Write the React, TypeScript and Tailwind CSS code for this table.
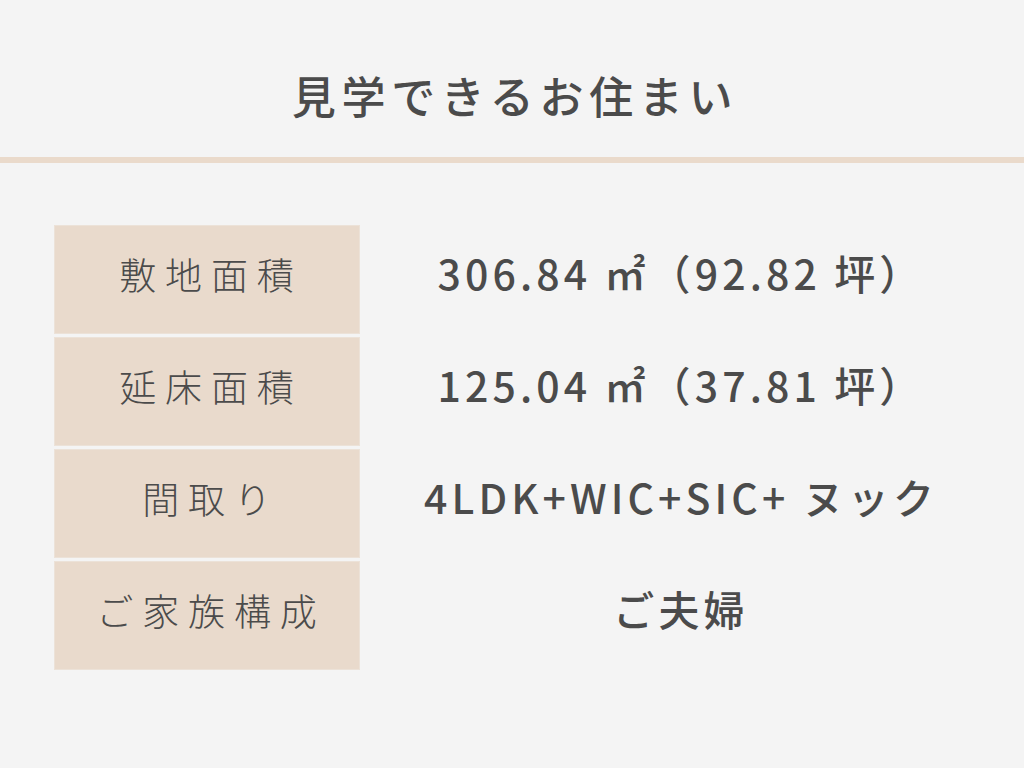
const rows: { label: string; value: string }[] = [
  { label: "敷地面積", value: "306.84 ㎡（92.82 坪）" },
  { label: "延床面積", value: "125.04 ㎡（37.81 坪）" },
  { label: "間取り", value: "4LDK+WIC+SIC+ ヌック" },
  { label: "ご家族構成", value: "ご夫婦" },
];

const jp = "font-['Noto_Sans_CJK_JP','Noto_Sans',sans-serif]";

export default function App() {
  return (
    <div className={`h-[768px] w-[1024px] overflow-hidden bg-[#f4f4f4] text-[#4b4b4b] ${jp}`}>
      <header className="flex h-[157px] items-center justify-center pt-[32px]">
        <h1 className="pl-[6px] text-[44px] font-medium tracking-[0.13em]">見学できるお住まい</h1>
      </header>
      <div className="h-[6px] bg-[#eadacb]" />

      <section className="mt-[62px] ml-[54px] mr-[22px] grid grid-cols-[306px_1fr] gap-y-[3px]">
        {rows.map((row) => (
          <div key={row.label} className="contents">
            <div className="flex h-[109px] items-center justify-center border border-[#ece2d8] bg-[#e9dacc] pb-[10px] pl-[8px] text-[37px] font-light tracking-[0.24em]">
              {row.label}
            </div>
            <div className="flex h-[109px] items-center justify-center pb-[14px] text-[41px] font-medium tracking-[0.1em]">
              {row.value}
            </div>
          </div>
        ))}
      </section>
    </div>
  );
}
